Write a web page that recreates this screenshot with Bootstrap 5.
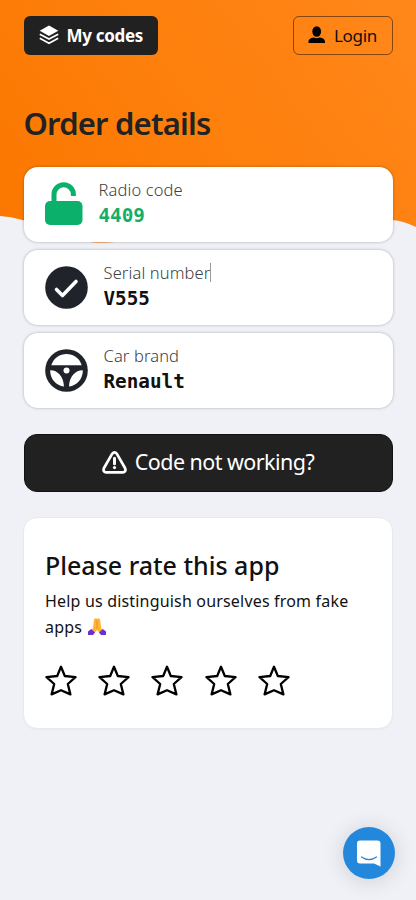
<!DOCTYPE html>
<html lang="en">
<head>
<meta charset="utf-8">
<meta name="viewport" content="width=device-width, initial-scale=1">
<title>Order details</title>
<link href="https://cdn.jsdelivr.net/npm/bootstrap@5.3.0/dist/css/bootstrap.min.css" rel="stylesheet">
<style>
body{font-family:"Noto Sans","Open Sans",sans-serif;background:#f0f1f6;color:#111;min-height:900px;overflow:hidden}
svg{display:block;flex:none}
.wave{position:absolute;left:0;top:0;z-index:-1}
.page{padding:16px 23.5px 0;position:relative;z-index:0}
.btn-top{height:39px;font-size:17px;border-radius:6px;line-height:1;white-space:nowrap}
.btn-codes,.btn-codes:hover{background:#212121;color:#fff;font-weight:700;width:134px;padding:0 0 1px 15px;border:0}
.btn-codes span{letter-spacing:-.3px}
.btn-login,.btn-login:hover{border:1px solid #87450f;color:#111;width:99.5px;padding:0 0 1px 14px}
.btn-login span{letter-spacing:-.3px}
.title{font-size:31px;font-weight:600;color:#222;line-height:40px;margin:48px 0 24px;letter-spacing:-.8px}
.tile{height:75px;border:0;border-radius:14px;box-shadow:0 0 3px rgba(0,0,0,.3);padding:0 21px 1px}
.label{font-size:16.5px;line-height:22px;color:#404040;font-weight:300;letter-spacing:.12px;margin-top:-1px;margin-bottom:1px}
.value{font:700 19.3px/27px "DejaVu Sans Mono",monospace;color:#111}
.value.ok{color:#16ad69}
.caret{width:1px;height:19px;background:#999}
.btn-help,.btn-help:hover{height:58px;background:#212121;color:#fff;border:1px solid #111;border-radius:13px;font-size:21.5px;margin-top:26px;padding:0 0 2px}
.btn-help span{letter-spacing:-.55px}
.rate{margin:25px -.5px 0;height:212px;border:1px solid #e8e9ed;border-radius:14px;padding:31px 21px 0;box-shadow:0 1px 2px rgba(0,0,0,.03)}
.rate h2{font-size:25px;font-weight:500;line-height:32px;margin:0 0 7px;color:#111}
.rate p{font-size:16px;line-height:26px;margin:0;letter-spacing:.18px}
.stars{margin-top:25px;gap:21.2px}
.chat{position:fixed;left:343px;top:827px;width:52px;height:52px;border-radius:50%;background:#2388dc;box-shadow:0 2px 22px rgba(0,0,0,.14)}
.hands{display:inline-block;vertical-align:-2px;margin-left:2px}
</style>
</head>
<body>
<main class="page">
<svg class="wave" width="416" height="250" viewBox="0 0 416 250"><defs><linearGradient id="g" gradientUnits="userSpaceOnUse" x1="20" y1="230" x2="360" y2="-20"><stop stop-color="#fb7800"/><stop offset="1" stop-color="#ff8618"/></linearGradient></defs><path fill="url(#g)" d="M0 0H416V227Q404 221 392 220C320 213 260 225 190 232Q135 242.600 95 242.600Q65 241 42 229Q22 217 0 216Z"/></svg>
<header class="d-flex justify-content-between">
<button class="btn btn-top btn-codes d-flex align-items-center"><svg width="20" height="20" viewBox="0 0 20 20" fill="#fff"><path d="M10 .5 19.300 5.700 10 11 .7 5.700Z"/><path d="M.8 9.200 10 14.100l9.200-4.900M.8 13.200 10 18.200l9.200-5" fill="none" stroke="#fff" stroke-width="1.700"/></svg><span class="ms-2">My codes</span></button>
<button class="btn btn-top btn-login d-flex align-items-center"><svg width="18" height="18" viewBox="0 0 18 18"><ellipse cx="8.700" cy="5.500" rx="4.400" ry="5.200"/><path d="M.5 17c-.4-4 2-5 5.200-5.600q3 1.600 6 0c3.200.6 5.800 1.600 5.300 5.600Z"/></svg><span class="ms-2">Login</span></button>
</header>
<h1 class="title">Order details</h1>
<section class="d-flex flex-column gap-2">
<div class="card tile flex-row align-items-center">
<svg width="38" height="44" viewBox="0 0 38 44"><rect y="19" width="37.500" height="24" rx="5" fill="#0bb16b"/><path d="M9 21V12.500a9.700 9.700 0 0 1 19.400 0v1.500" fill="none" stroke="#0bb16b" stroke-width="5"/></svg>
<div class="ms-3"><div class="label">Radio code</div><div class="value ok">4409</div></div></div>
<div class="card tile flex-row align-items-center">
<svg width="43" height="43" viewBox="0 0 43 43"><circle cx="21.500" cy="21.500" r="21.300" fill="#20242a"/><path d="m11.500 23.500 6 6L31 15.500" fill="none" stroke="#fff" stroke-width="3.600" stroke-linecap="round" stroke-linejoin="round"/></svg>
<div class="ms-3"><div class="label d-flex align-items-center"><span>Serial number</span><span class="caret"></span></div><div class="value">V555</div></div></div>
<div class="card tile flex-row align-items-center">
<svg width="43" height="43" viewBox="0 0 43 43"><circle cx="21.500" cy="21.500" r="21.300" fill="#20242a"/><g fill="#fff"><path d="M6.300 16.200C9 8.500 15 5.100 21.500 5.100S34 8.500 36.700 16.200Z"/><path d="M5.200 21.300C12 21 18.500 27 19 37.500C11 36.800 5 30 5.200 21.300ZM37.800 21.300C31 21 24.500 27 24 37.500C32 36.800 38 30 37.800 21.300Z"/><circle cx="21.500" cy="21.500" r="3"/></g></svg>
<div class="ms-3"><div class="label">Car brand</div><div class="value">Renault</div></div></div>
</section>
<button class="btn btn-help w-100 d-flex align-items-center justify-content-center"><svg width="25" height="23" viewBox="0 0 25 23" fill="none" stroke="#fff" stroke-width="2.700" stroke-linejoin="round"><path d="M10.100 2.800Q12.500 0 14.900 2.800L23 17Q24.500 20.800 21 21.300H4Q.5 20.800 2 17Z"/><path d="M12.500 7.200v5.500" stroke-width="3" stroke-linecap="round"/><circle cx="12.500" cy="16.600" r="1.600" fill="#fff" stroke="none"/></svg><span class="ms-2">Code not working?</span></button>
<section class="card rate">
<h2>Please rate this app</h2>
<p>Help us distinguish ourselves from fake<br>apps <svg class="hands" width="18" height="17" viewBox="0 0 18 17"><path d="M6 1.500Q7.500-.5 9 1Q10.500-.5 12 1.500L13.200 10 15 13l-3 2.500L9 12l-3 3.500L3 13l2-3Z" fill="#ffb52d"/><path d="M9 2v9" stroke="#e7942a"/><path d="M3.200 11 7 14.500 5 17H0v-3.500ZM14.800 11 11 14.500 13 17h5v-3.500Z" fill="#6c2fd6"/></svg></p>
<div class="stars d-flex">
<svg width="32" height="32" viewBox="0 0 32 32"><path id="s" d="M16 1.800 19.800 11 30.500 12.100 22.800 19 25.400 29.400 16 25.200 6.600 29.400 9.200 19 1.500 12.100 12.200 11Z" fill="none" stroke="#000" stroke-width="2.300" stroke-linejoin="round"/></svg>
<svg width="32" height="32"><use href="#s"/></svg><svg width="32" height="32"><use href="#s"/></svg><svg width="32" height="32"><use href="#s"/></svg><svg width="32" height="32"><use href="#s"/></svg>
</div>
</section>
</main>
<div class="chat d-flex align-items-center justify-content-center"><svg width="24" height="27" viewBox="0 0 24 27"><path d="M3 .5h17.500a3 3 0 0 1 3 3V26.500L17 23.500H3a3 3 0 0 1-3-3v-17a3 3 0 0 1 3-3Z" fill="#fff"/><path d="M4.500 17q7.500 5.200 15 0" fill="none" stroke="#2388dc" stroke-width="1.300" stroke-linecap="round"/></svg></div>
<script src="https://cdn.jsdelivr.net/npm/bootstrap@5.3.0/dist/js/bootstrap.bundle.min.js"></script>
</body>
</html>
